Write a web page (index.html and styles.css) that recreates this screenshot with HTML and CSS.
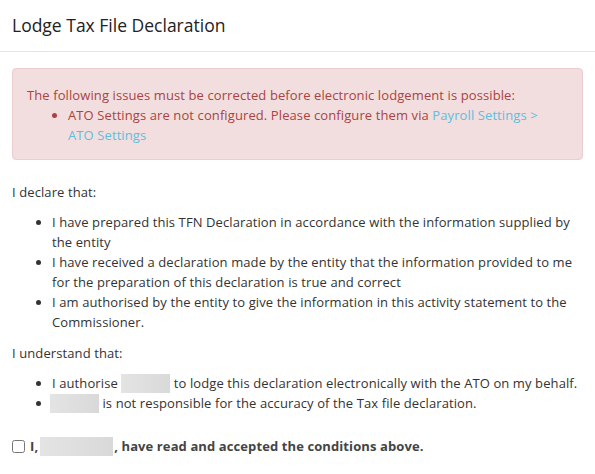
FILE: index.html
```html
<!DOCTYPE html>
<html>
<head>
<meta charset="utf-8">
<link rel="stylesheet" href="styles.css">
</head>
<body>
<div class="modal">
  <div class="modal-header">
    <h4 class="title">Lodge Tax File Declaration</h4>
  </div>
  <div class="modal-body">
    <div class="alert">
      <div>The following issues must be corrected before electronic lodgement is possible:</div>
      <ul class="alert-list">
        <li>ATO Settings are not configured. Please configure them via <a href="#">Payroll Settings &gt; ATO Settings</a></li>
      </ul>
    </div>
    <p class="lead-in first">I declare that:</p>
    <ul class="list">
      <li>I have prepared this TFN Declaration in accordance with the information supplied by the entity</li>
      <li>I have received a declaration made by the entity that the information provided to me for the preparation of this declaration is true and correct</li>
      <li>I am authorised by the entity to give the information in this activity statement to the Commissioner.</li>
    </ul>
    <p class="lead-in">I understand that:</p>
    <ul class="list">
      <li>I authorise <span class="redact r1"></span> to lodge this declaration electronically with the ATO on my behalf.</li>
      <li><span class="redact r2"></span> is not responsible for the accuracy of the Tax file declaration.</li>
    </ul>
    <label class="accept">
      <input type="checkbox" class="check">
      <span>I,<span class="redact r3"></span>, have read and accepted the conditions above.</span>
    </label>
  </div>
</div>
</body>
</html>
```

FILE: styles.css
```css
html, body {
  margin: 0;
  padding: 0;
  background: #fff;
}
body {
  font-family: "Open Sans", "Liberation Sans", sans-serif;
  font-size: 13px;
  line-height: 20px;
  letter-spacing: 0.1px;
  color: #333;
}
.modal-header {
  padding: 12px 12px 13px;
  border-bottom: 1px solid #e5e5e5;
}
.title {
  margin: 0;
  font-size: 17.5px;
  font-weight: 400;
  line-height: 26px;
  letter-spacing: 0;
  color: #222;
}
.modal-body {
  padding: 16px 12px 10px;
}
.alert {
  background: #f2dede;
  border: 1px solid #ebccd1;
  border-radius: 4px;
  color: #a94442;
  padding: 16px 14px 14px;
}
.alert-list {
  margin: 0;
  padding-left: 41px;
  padding-right: 12px;
}
.alert a {
  color: #5bc0de;
  text-decoration: none;
}
.lead-in {
  margin: 11px 0 10px;
}
.lead-in.first {
  margin-top: 22px;
}
.list {
  margin: 0;
  padding-left: 40px;
}
.redact {
  display: inline-block;
  vertical-align: -5px;
  height: 19px;
  background: linear-gradient(90deg, #e4e4e4, #d9d9d9);
  filter: blur(0.6px);
}
.r1 { width: 49px; }
.r2 { width: 49px; margin-left: -2px; }
.r3 { width: 73px; margin: 0 1px 0 2px; }
.accept {
  display: flex;
  align-items: center;
  margin-top: 23px;
  font-weight: 700;
  color: #444;
}
.check {
  margin: 0 5px 0 0;
  width: 13px;
  height: 13px;
}
```
